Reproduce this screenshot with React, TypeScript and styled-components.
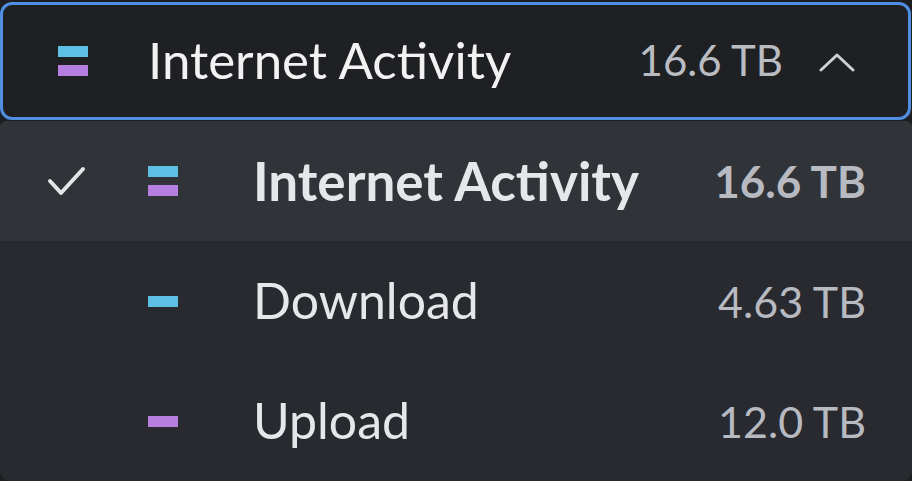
import React from "react";
import styled, { createGlobalStyle } from "styled-components";

type Option = {
  label: string;
  value: string;
  bars: string[];
};

const colors = {
  cyan: "#5ebfe4",
  purple: "#b57ee0",
};

const options: Option[] = [
  { label: "Internet Activity", value: "16.6 TB", bars: [colors.cyan, colors.purple] },
  { label: "Download", value: "4.63 TB", bars: [colors.cyan] },
  { label: "Upload", value: "12.0 TB", bars: [colors.purple] },
];

const GlobalStyle = createGlobalStyle`
  html, body {
    margin: 0;
    padding: 0;
    background: #1d1e21;
  }
  body {
    font-family: Lato, "Noto Sans", sans-serif;
    -webkit-font-smoothing: antialiased;
  }
`;

const Legend = ({ bars }: { bars: string[] }) => (
  <BarStack>
    {bars.map((c, i) => (
      <Bar key={i} color={c} />
    ))}
  </BarStack>
);

const App = () => {
  const selected = 0;
  return (
    <>
      <GlobalStyle />
      <Wrapper>
        <Trigger>
          <Legend bars={options[selected].bars} />
          <TriggerLabel>{options[selected].label}</TriggerLabel>
          <TriggerValue>{options[selected].value}</TriggerValue>
          <Chevron width="36" height="20" viewBox="0 0 36 20">
            <polyline
              points="2,17 18,2 34,17"
              fill="none"
              stroke="#cfd0d3"
              strokeWidth="3"
              strokeLinecap="round"
              strokeLinejoin="round"
            />
          </Chevron>
        </Trigger>
        <Menu>
          {options.map((o, i) => (
            <Row key={o.label} active={i === selected}>
              <CheckCell>
                {i === selected && (
                  <svg width="40" height="32" viewBox="0 0 40 32">
                    <polyline
                      points="3,15 14,27 36,3"
                      fill="none"
                      stroke="#e4e5e8"
                      strokeWidth="4"
                      strokeLinecap="round"
                      strokeLinejoin="round"
                    />
                  </svg>
                )}
              </CheckCell>
              <Legend bars={o.bars} />
              <RowLabel active={i === selected}>{o.label}</RowLabel>
              <RowValue active={i === selected}>{o.value}</RowValue>
            </Row>
          ))}
        </Menu>
      </Wrapper>
    </>
  );
};

export default App;

const Wrapper = styled.div`
  width: 912px;
  height: 481px;
  padding-top: 2px;
  box-sizing: border-box;
  display: flex;
  flex-direction: column;
`;

const Trigger = styled.div`
  height: 118px;
  box-sizing: border-box;
  margin: 0 1px 0 0;
  border: 3px solid #4f8ee0;
  border-radius: 12px;
  background: #1f2023;
  display: flex;
  align-items: center;
  padding: 0 53px 0 55px;
`;

const BarStack = styled.div`
  width: 30px;
  display: flex;
  flex-direction: column;
  gap: 8px;
`;

const Bar = styled.div<{ color: string }>`
  height: 11px;
  background: ${(p) => p.color};
`;

const TriggerLabel = styled.div`
  flex: 1;
  margin-left: 60px;
  font-size: 51px;
  color: #f2f2f3;
  line-height: 1;
  padding-bottom: 4px;
`;

const TriggerValue = styled.div`
  font-size: 42px;
  color: #b9bcc2;
  line-height: 1;
  padding-bottom: 2px;
`;

const Chevron = styled.svg`
  margin-left: 36px;
  margin-top: 4px;
`;

const Menu = styled.div`
  margin-top: 1px;
  flex: 1;
  background: #282a2f;
  border-radius: 6px 6px 10px 10px;
  overflow: hidden;
  display: flex;
  flex-direction: column;
`;

const Row = styled.div<{ active: boolean }>`
  height: 120px;
  display: grid;
  grid-template-columns: 101px 30px 1fr auto;
  align-items: center;
  padding: 0 46px 0 47px;
  background: ${(p) => (p.active ? "#303338" : "transparent")};
`;

const CheckCell = styled.div`
  display: flex;
  align-items: center;
  margin-top: 2px;
`;

const RowLabel = styled.div<{ active: boolean }>`
  margin-left: 75px;
  font-size: ${(p) => (p.active ? 53 : 50)}px;
  line-height: 1;
  font-weight: ${(p) => (p.active ? 700 : 400)};
  color: #e6e7ea;
  padding-bottom: 2px;
`;

const RowValue = styled.div<{ active: boolean }>`
  font-size: ${(p) => (p.active ? 44 : 43)}px;
  line-height: 1;
  font-weight: ${(p) => (p.active ? 700 : 400)};
  color: #b7bac0;
`;
